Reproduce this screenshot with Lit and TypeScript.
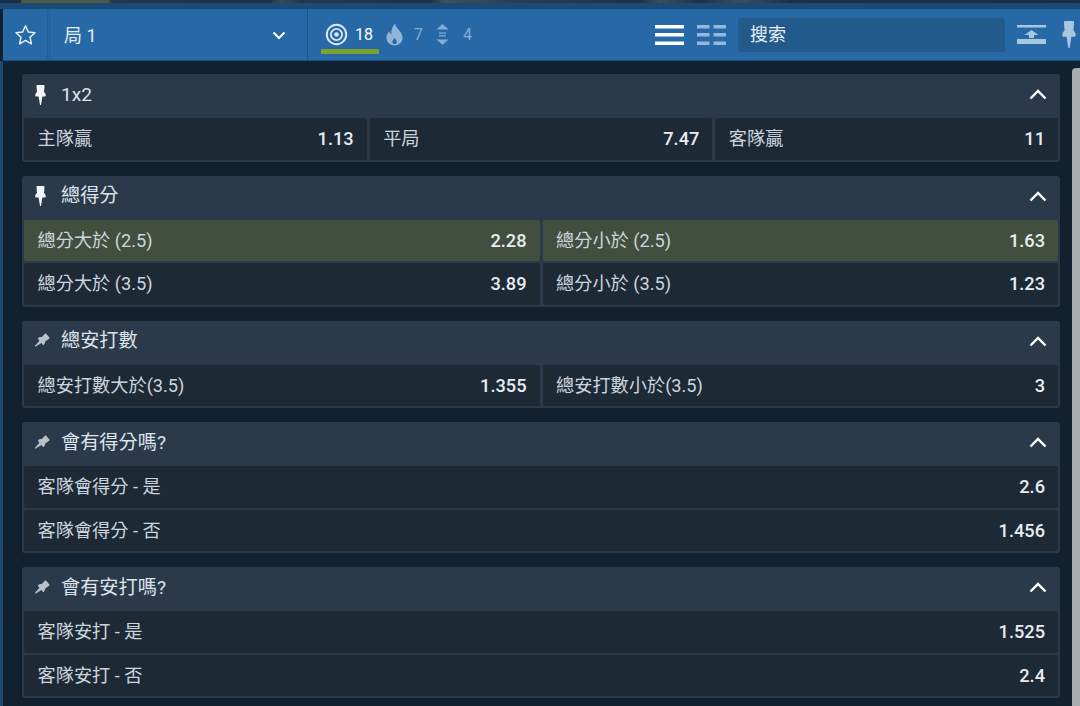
import { LitElement, html, css, svg } from "lit";
import { customElement } from "lit/decorators.js";

const pinUp = svg`<path d="M2.500 0h6c.8 0 1 .6 1 1.200L9 7c1 .8 1.800 2 1.800 3.600 0 .6-.3 1-.9 1H7.400L6 20H5L3.600 11.600H1.100c-.6 0-.9-.4-.9-1C.2 9 1 7.800 2 7L1.500 1.200C1.500.6 1.700 0 2.500 0z"/>`;
const pinTilt = svg`<g transform="translate(10.500 9) rotate(50) scale(.92) translate(-5.500 -10)">${pinUp}</g>`;

type Row = [string, string];
type Group = { title: string; pinned: boolean; cols: number; hi?: boolean; rows: Row[] };

const groups: Group[] = [
  { title: "1x2", pinned: true, cols: 3, rows: [["主隊贏", "1.13"], ["平局", "7.47"], ["客隊贏", "11"]] },
  { title: "總得分", pinned: true, cols: 2, hi: true, rows: [["總分大於 (2.5)", "2.28"], ["總分小於 (2.5)", "1.63"], ["總分大於 (3.5)", "3.89"], ["總分小於 (3.5)", "1.23"]] },
  { title: "總安打數", pinned: false, cols: 2, rows: [["總安打數大於(3.5)", "1.355"], ["總安打數小於(3.5)", "3"]] },
  { title: "會有得分嗎?", pinned: false, cols: 1, rows: [["客隊會得分 - 是", "2.6"], ["客隊會得分 - 否", "1.456"]] },
  { title: "會有安打嗎?", pinned: false, cols: 1, rows: [["客隊安打 - 是", "1.525"], ["客隊安打 - 否", "2.4"]] },
];

@customElement("app-root")
export class AppRoot extends LitElement {
  static styles = css`
    :host {
      display: block;
      width: 1080px;
      height: 706px;
      overflow: hidden;
      position: relative;
      background: #12212f;
      font-family: Roboto, "Noto Sans CJK TC", sans-serif;
      color: #d6dee6;
    }
    .strip {
      height: 3px;
      background: linear-gradient(90deg, #1b2c42 0, #1b2c42 20px, #4a5a44 22px, #4a5a44 108px, #243548 112px, #1f3046 270px, #3a4a50 280px, #26374a 300px, #1f3046 430px, #3f5258 445px, #2a3c50 520px, #1f3046 640px, #3c4e58 660px, #1f3046 700px, #3b4e5c 740px, #1f3046 790px, #1b2c42 1080px);
    }
    .strip2 { height: 6px; background: #1c4a76; }
    .bar {
      height: 52px;
      margin-left: 3px;
      background: #2768a6;
      border-bottom: 1px solid #1c4f80;
      box-sizing: border-box;
      display: flex;
      align-items: stretch;
    }
    .star { width: 45px; box-sizing: border-box; display: flex; align-items: center; justify-content: center; border-right: 1px solid #235e96; }
    .sel {
      width: 259px;
      margin-left: 1px;
      border-left: 1px solid #235e96;
      border-right: 1px solid #1f5688;
      padding: 2px 21px 0 14px;
      box-sizing: border-box;
      display: flex;
      align-items: center;
      justify-content: space-between;
      font-size: 18px;
      line-height: 22px;
      color: #e6edf3;
    }
    .counts { display: flex; align-items: center; margin-left: 13px; position: relative; height: 100%; font-size: 16px; color: #84add2; }
    .tab { display: flex; align-items: center; gap: 7px; width: 58px; height: 100%; padding-left: 4px; box-sizing: border-box; color: #fff; position: relative; }
    .tab::after { content: ""; position: absolute; left: 0; right: 0; bottom: 6px; height: 5px; background: #7ba32b; }
    .c { display: flex; align-items: center; height: 100%; }
    .flame { margin-left: 6px; }
    .flame span { margin-left: 10px; }
    .arrows { margin-left: 13px; }
    .arrows span { margin-left: 14px; }
    .spacer { flex: 1; }
    .tools { display: flex; align-items: center; margin-right: 1px; }
    .grid-icon { margin-left: 13px; }
    .search {
      width: 267px;
      height: 34px;
      margin: 0 12px;
      background: #225a8c;
      border-radius: 3px;
      padding: 1px 0 0 12px;
      box-sizing: border-box;
      display: flex;
      align-items: center;
      font-size: 18px;
      line-height: 22px;
      color: #e6edf3;
    }
    .top-pin { margin: 0 3px 0 16px; }
    .content { padding: 13px 0 0 22px; width: 1038px; display: flex; flex-direction: column; gap: 14px; }
    .card { background: #2b3a4b; border-radius: 3px; padding: 0 2px 2px; }
    .head { height: 44px; box-sizing: border-box; padding: 0 11px 3px 0; display: flex; align-items: center; font-size: 19.2px; line-height: 24px; color: #dde4ea; }
    .pin { width: 37px; padding-left: 11px; box-sizing: border-box; flex: none; display: flex; }
    .pin.tilt { padding-left: 8px; }
    .title { flex: 1; }
    .grid { display: grid; gap: 2px 3px; }
    .cell {
      height: 41.5px;
      background: #1e2936;
      border-radius: 2px;
      display: flex;
      align-items: center;
      justify-content: space-between;
      box-sizing: border-box;
      padding: 1px 13px 0 13.5px;
      font-size: 18.2px;
      line-height: 22px;
      color: #ccd5dd;
    }
    .cell.hi { background: #434f3e; }
    .odd { font-weight: 500; color: #e8edf1; }
    .scroll { position: absolute; right: 0; top: 68px; width: 8px; height: 638px; background: #a9adb0; border-radius: 4px 0 0 0; }
    .edge { position: absolute; left: 0; top: 61px; bottom: 0; width: 3px; background: #1d4a75; }
  `;

  render() {
    return html`
      <div class="strip"></div>
      <div class="strip2"></div>
      <div class="bar">
        <div class="star">
          <svg width="23" height="22" viewBox="0 0 22 22" fill="none" stroke="#e8f0f7" stroke-width="1.500" stroke-linejoin="round"><path d="M11 1.800l2.800 6.200 6.700.7-5 4.500 1.400 6.600L11 16.400l-5.900 3.400 1.400-6.600-5-4.500 6.700-.7z"/></svg>
        </div>
        <div class="sel">
          <span>局 1</span>
          <svg width="14" height="9" viewBox="0 0 14 9" fill="none" stroke="#fff" stroke-width="2"><path d="M1.500 1.500L7 7l5.500-5.500"/></svg>
        </div>
        <div class="counts">
          <div class="tab">
            <svg width="23" height="23" viewBox="0 0 23 23" fill="none" stroke="#dbe7f2"><circle cx="11.500" cy="11.500" r="9.700" stroke-width="2"/><circle cx="11.500" cy="11.500" r="5.600" stroke-width="1.800"/><circle cx="11.500" cy="11.500" r="2.300" fill="#dbe7f2" stroke="none"/></svg>
            <span>18</span>
          </div>
          <div class="c flame">
            <svg width="19" height="23" viewBox="0 0 18 24"><path fill="#8fb5d8" fill-rule="evenodd" d="M9.500.5c.7 3.600 2.900 5.200 5 8 1.700 2.200 2.900 4.600 2.900 7C17.400 20.200 13.700 23.500 9 23.500S.6 20.200.6 15.500c0-2.800 1.300-5 3.200-6.800.2 1.400.8 2.500 1.800 3.200C5.400 7.800 6.700 3.600 9.500.5zM9.100 15.500c-.5 1.500-2.300 2.300-2.300 4.200 0 1.300 1 2.300 2.300 2.300s2.300-1 2.300-2.300c0-1.900-1.800-2.700-2.300-4.200z"/></svg>
            <span>7</span>
          </div>
          <div class="c arrows">
            <svg width="13" height="21" viewBox="0 0 13 21" fill="#84add2"><path d="M6.500 0l6 5.500H.5zM6.500 21l-6-5.500h12zM3 8.400h7v1.300H3zM3 11.300h7v1.300H3z"/></svg>
            <span>4</span>
          </div>
        </div>
        <div class="spacer"></div>
        <div class="tools">
          <svg width="29" height="20" viewBox="0 0 29 20" fill="#fff"><rect y="0" width="29" height="3.500"/><rect y="8" width="29" height="3.500"/><rect y="16.500" width="29" height="3.500"/></svg>
          <svg class="grid-icon" width="29" height="20" viewBox="0 0 29 20" fill="#93b8da"><rect width="12.500" height="3.500"/><rect x="16.500" width="12.500" height="3.500"/><rect y="8" width="12.500" height="3.500"/><rect x="16.500" y="8" width="12.500" height="3.500"/><rect y="16.500" width="12.500" height="3.500"/><rect x="16.500" y="16.500" width="12.500" height="3.500"/></svg>
          <div class="search">搜索</div>
          <svg width="29" height="19" viewBox="0 0 29 19" fill="#a9c6e1"><rect width="29" height="2.500"/><path d="M14.500 5l7 5h-4.500v3h-5v-3H7.500z"/><rect y="14" width="29" height="5"/></svg>
          <svg class="top-pin" width="14" height="27" viewBox="0 0 11 20" preserveAspectRatio="none" fill="#a9c6e1">${pinUp}</svg>
        </div>
      </div>
      <div class="content">
        ${groups.map(
          (g) => html`
            <div class="card">
              <div class="head">
                <span class="pin ${g.pinned ? "" : "tilt"}">
                  ${g.pinned
                    ? html`<svg width="11" height="20" viewBox="0 0 11 20" fill="#f2f4f6">${pinUp}</svg>`
                    : html`<svg width="18" height="18" viewBox="0 0 20 18" fill="#b9c0c7">${pinTilt}</svg>`}
                </span>
                <span class="title">${g.title}</span>
                <svg width="18" height="11" viewBox="0 0 18 11" fill="none" stroke="#fff" stroke-width="2.400"><path d="M1.500 9.500L9 2l7.500 7.500"/></svg>
              </div>
              <div class="grid" style="grid-template-columns:repeat(${g.cols},1fr)">
                ${g.rows.map(
                  (r, i) => html`<div class="cell ${g.hi && i < 2 ? "hi" : ""}"><span>${r[0]}</span><span class="odd">${r[1]}</span></div>`
                )}
              </div>
            </div>
          `
        )}
      </div>
      <div class="edge"></div>
      <div class="scroll"></div>
    `;
  }
}
